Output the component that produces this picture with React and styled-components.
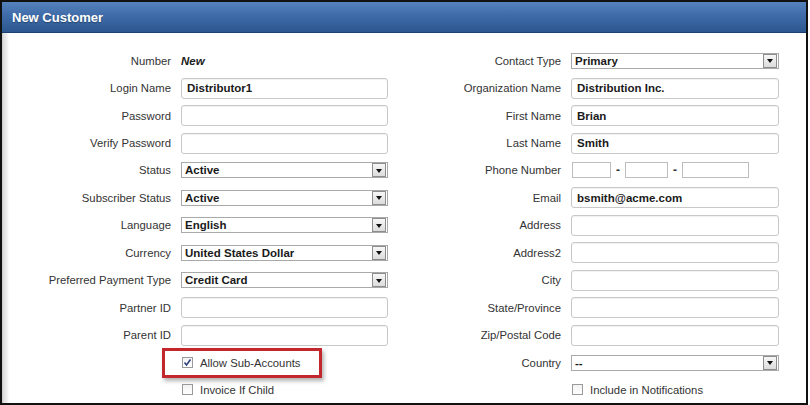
import React from 'react'
import styled, { createGlobalStyle } from 'styled-components';

const GlobalStyle = createGlobalStyle`
    html, body {
        margin: 0;
        padding: 0;
        background: #fff;
    }
    body {
        font-family: "Liberation Sans", Arial, sans-serif;
    }
`;

const Frame = styled.div`
    width: 804px;
    height: 401px;
    border: 2px solid #111;
    background: #fff;
    overflow: hidden;
    display: flex;
    flex-direction: column;
`;

const Header = styled.div`
    height: 30px;
    flex: none;
    display: flex;
    align-items: center;
    padding: 0 10px;
    background: linear-gradient(to bottom, #5582bd 0%, #3f6ca8 45%, #2b568f 100%);
    border-bottom: 1px solid #1d3f6e;
    color: #fff;
    font-weight: bold;
    font-size: 13px;
    text-shadow: 0 1px 1px rgba(0, 0, 0, 0.3);
`;

const Body = styled.div`
    flex: 1;
    display: flex;
    background: linear-gradient(to right, #c9c9c9 0, #e2e2e2 2px, #efefef 5px, #fff 7px);
`;

const Columns = styled.div`
    display: grid;
    grid-template-columns: 378px 379px;
    column-gap: 12px;
    padding: 14px 0 0 8px;
`;

const Section = styled.div`
    display: grid;
    grid-template-columns: 161px 1fr;
    grid-auto-rows: 27.45px;
    column-gap: 10px;
    align-items: center;
`;

const Label = styled.div`
    text-align: right;
    font-size: 11.3px;
    color: #333;
    white-space: nowrap;
`;

const Field = styled.div`
    display: flex;
    align-items: center;
    position: relative;
    height: 100%;
`;

const Static = styled.span`
    font-size: 11.5px;
    font-weight: bold;
    font-style: italic;
    color: #222;
`;

const TextBox = styled.div`
    box-sizing: border-box;
    width: 100%;
    height: 21px;
    border: 1px solid #c8c8c8;
    border-radius: 3px;
    box-shadow: inset 0 1px 1px rgba(0, 0, 0, 0.06);
    padding: 0 5px;
    display: flex;
    align-items: center;
    font-size: 11.5px;
    font-weight: bold;
    color: #1a1a1a;
    background: #fff;
`;

const Select = styled.div`
    box-sizing: border-box;
    width: 100%;
    height: 16px;
    border: 1px solid #a9a9a9;
    display: flex;
    align-items: center;
    justify-content: space-between;
    padding-left: 3px;
    font-size: 11.5px;
    font-weight: bold;
    color: #1a1a1a;
    background: #fff;
`;

const Arrow = styled.div`
    box-sizing: border-box;
    width: 14px;
    height: 14px;
    margin-right: 1px;
    border: 1px solid #8d8d8d;
    background: linear-gradient(to bottom, #f7f7f7, #dcdcdc);
    display: flex;
    align-items: center;
    justify-content: center;

    &::after {
        content: '';
        border-left: 3.5px solid transparent;
        border-right: 3.5px solid transparent;
        border-top: 4px solid #111;
        margin-top: 1px;
    }
`;

const PhoneRow = styled.div`
    display: flex;
    align-items: center;
    margin-left: 1px;
`;

const PhoneBox = styled.div`
    box-sizing: border-box;
    width: ${({w}) => w}px;
    height: 16px;
    border: 1px solid #bdbdbd;
    background: #fff;
`;

const Dash = styled.span`
    width: 14px;
    text-align: center;
    font-size: 12px;
    font-weight: bold;
    color: #333;
`;

const CheckLine = styled.label`
    display: flex;
    align-items: center;
    gap: 7px;
    margin-left: 1px;
    font-size: 11.3px;
    color: #333;
`;

const Box = styled.span`
    box-sizing: border-box;
    width: 11px;
    height: 11px;
    border: 1px solid #9a9a9a;
    background: linear-gradient(to bottom, #f2f2f2, #ffffff);
    display: flex;
    align-items: center;
    justify-content: center;
`;

const Highlight = styled.div`
    position: absolute;
    left: -19px;
    top: -1px;
    width: 160px;
    height: 30px;
    box-sizing: border-box;
    border: 3px solid #c1272d;
    box-shadow: 2px 3px 4px rgba(0, 0, 0, 0.3);
    pointer-events: none;
`;

const Empty = styled.div``;

function Check({ checked, children }) {
    return (
        <CheckLine>
            <Box>
                {checked && (
                    <svg width="9" height="9" viewBox="0 0 9 9">
                        <path d="M1.5 4.5 L3.5 7 L7.5 1.5" fill="none" stroke="#2a3d7a" strokeWidth="1.5" />
                    </svg>
                )}
            </Box>
            {children}
        </CheckLine>
    );
}

function Dropdown({ value }) {
    return (
        <Select>
            <span>{value}</span>
            <Arrow />
        </Select>
    );
}

export default function App() {
    return (
        <>
            <GlobalStyle />
            <Frame>
                <Header>New Customer</Header>
                <Body>
                    <Columns>
                        <Section>
                            <Label>Number</Label>
                            <Field><Static>New</Static></Field>
                            <Label>Login Name</Label>
                            <Field><TextBox>Distributor1</TextBox></Field>
                            <Label>Password</Label>
                            <Field><TextBox /></Field>
                            <Label>Verify Password</Label>
                            <Field><TextBox /></Field>
                            <Label>Status</Label>
                            <Field><Dropdown value="Active" /></Field>
                            <Label>Subscriber Status</Label>
                            <Field><Dropdown value="Active" /></Field>
                            <Label>Language</Label>
                            <Field><Dropdown value="English" /></Field>
                            <Label>Currency</Label>
                            <Field><Dropdown value="United States Dollar" /></Field>
                            <Label>Preferred Payment Type</Label>
                            <Field><Dropdown value="Credit Card" /></Field>
                            <Label>Partner ID</Label>
                            <Field><TextBox /></Field>
                            <Label>Parent ID</Label>
                            <Field><TextBox /></Field>
                            <Empty />
                            <Field>
                                <Check checked>Allow Sub-Accounts</Check>
                                <Highlight />
                            </Field>
                            <Empty />
                            <Field><Check>Invoice If Child</Check></Field>
                        </Section>
                        <Section>
                            <Label>Contact Type</Label>
                            <Field><Dropdown value="Primary" /></Field>
                            <Label>Organization Name</Label>
                            <Field><TextBox>Distribution Inc.</TextBox></Field>
                            <Label>First Name</Label>
                            <Field><TextBox>Brian</TextBox></Field>
                            <Label>Last Name</Label>
                            <Field><TextBox>Smith</TextBox></Field>
                            <Label>Phone Number</Label>
                            <Field>
                                <PhoneRow>
                                    <PhoneBox w={39} />
                                    <Dash>-</Dash>
                                    <PhoneBox w={43} />
                                    <Dash>-</Dash>
                                    <PhoneBox w={67} />
                                </PhoneRow>
                            </Field>
                            <Label>Email</Label>
                            <Field><TextBox>bsmith@acme.com</TextBox></Field>
                            <Label>Address</Label>
                            <Field><TextBox /></Field>
                            <Label>Address2</Label>
                            <Field><TextBox /></Field>
                            <Label>City</Label>
                            <Field><TextBox /></Field>
                            <Label>State/Province</Label>
                            <Field><TextBox /></Field>
                            <Label>Zip/Postal Code</Label>
                            <Field><TextBox /></Field>
                            <Label>Country</Label>
                            <Field><Dropdown value="--" /></Field>
                            <Empty />
                            <Field><Check>Include in Notifications</Check></Field>
                        </Section>
                    </Columns>
                </Body>
            </Frame>
        </>
    )
}
